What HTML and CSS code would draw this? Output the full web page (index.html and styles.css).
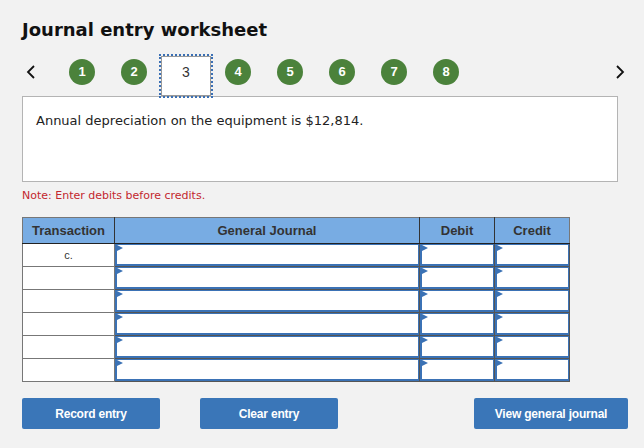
FILE: index.html
```html
<!DOCTYPE html>
<html lang="en">
<head>
    <meta charset="UTF-8">
    <meta name="viewport" content="width=device-width, initial-scale=1.0">
    <title>Journal entry worksheet</title>
    <link rel="stylesheet" href="styles.css">
</head>
<body>
    <div class="page">
        <h1 class="title">Journal entry worksheet</h1>

        <div class="steps">
            <div class="arrow arrow-left">
                <svg width="9" height="14" viewBox="0 0 9 14"><path d="M8 1 L2 7 L8 13" fill="none" stroke="#111" stroke-width="1.8"/></svg>
            </div>
            <div class="slot"><span class="dot">1</span></div>
            <div class="slot"><span class="dot">2</span></div>
            <div class="slot"><span class="current">3</span></div>
            <div class="slot"><span class="dot">4</span></div>
            <div class="slot"><span class="dot">5</span></div>
            <div class="slot"><span class="dot">6</span></div>
            <div class="slot"><span class="dot">7</span></div>
            <div class="slot"><span class="dot">8</span></div>
            <div class="arrow arrow-right">
                <svg width="9" height="14" viewBox="0 0 9 14"><path d="M1 1 L7 7 L1 13" fill="none" stroke="#111" stroke-width="1.8"/></svg>
            </div>
        </div>

        <div class="question">Annual depreciation on the equipment is $12,814.</div>

        <p class="note">Note: Enter debits before credits.</p>

        <table class="journal">
            <thead>
                <tr>
                    <th class="col-trans">Transaction</th>
                    <th class="col-gj">General Journal</th>
                    <th class="col-amt">Debit</th>
                    <th class="col-amt">Credit</th>
                </tr>
            </thead>
            <tbody>
                <tr>
                    <td class="trans">c.</td>
                    <td class="cell"><div class="field"></div></td>
                    <td class="cell"><div class="field"></div></td>
                    <td class="cell"><div class="field"></div></td>
                </tr>
                <tr>
                    <td class="trans"></td>
                    <td class="cell"><div class="field"></div></td>
                    <td class="cell"><div class="field"></div></td>
                    <td class="cell"><div class="field"></div></td>
                </tr>
                <tr>
                    <td class="trans"></td>
                    <td class="cell"><div class="field"></div></td>
                    <td class="cell"><div class="field"></div></td>
                    <td class="cell"><div class="field"></div></td>
                </tr>
                <tr>
                    <td class="trans"></td>
                    <td class="cell"><div class="field"></div></td>
                    <td class="cell"><div class="field"></div></td>
                    <td class="cell"><div class="field"></div></td>
                </tr>
                <tr>
                    <td class="trans"></td>
                    <td class="cell"><div class="field"></div></td>
                    <td class="cell"><div class="field"></div></td>
                    <td class="cell"><div class="field"></div></td>
                </tr>
                <tr>
                    <td class="trans"></td>
                    <td class="cell"><div class="field"></div></td>
                    <td class="cell"><div class="field"></div></td>
                    <td class="cell"><div class="field"></div></td>
                </tr>
            </tbody>
        </table>

        <div class="actions">
            <button class="btn">Record entry</button>
            <button class="btn">Clear entry</button>
            <button class="btn btn-wide">View general journal</button>
        </div>
    </div>
</body>
</html>
```

FILE: styles.css
```css
body {
    margin: 0;
    background-color: #f2f2f2;
    font-family: "DejaVu Sans", Verdana, sans-serif;
    color: #222;
}
.page {
    padding: 0 16px 0 22px;
}
.title {
    margin: 19px 0 0;
    font-size: 18px;
    line-height: 22px;
    font-weight: bold;
    color: #111;
}
.steps {
    position: relative;
    z-index: 1;
    display: flex;
    align-items: flex-start;
    height: 44px;
    margin-top: 13px;
}
.arrow {
    padding-top: 10px;
}
.arrow-left {
    width: 30px;
    padding-left: 4px;
}
.arrow-right {
    margin-left: auto;
    margin-right: 3px;
}
.slot {
    width: 52px;
    display: flex;
    justify-content: center;
}
.dot {
    width: 26px;
    height: 26px;
    margin-top: 5px;
    border-radius: 50%;
    background-color: #4b823b;
    color: white;
    font-family: "Liberation Sans", Arial, sans-serif;
    font-weight: bold;
    font-size: 13px;
    line-height: 26px;
    text-align: center;
}
.current {
    box-sizing: border-box;
    width: 50px;
    height: 40px;
    margin: 2px -1px 0;
    background-color: white;
    border: 1px solid #9a9a9a;
    outline: 2px dotted #3a6fb4;
    color: #333;
    font-family: "Liberation Sans", Arial, sans-serif;
    font-size: 14px;
    line-height: 14px;
    padding-top: 8px;
    text-align: center;
}
.question {
    box-sizing: border-box;
    width: 596px;
    height: 86px;
    margin-top: -2px;
    padding: 16px 13px;
    background-color: white;
    border: 1px solid #b4b4b4;
    font-size: 13px;
    line-height: 15px;
    color: #222;
}
.note {
    margin: 7px 0 0;
    font-size: 11px;
    line-height: 13px;
    color: #c3272e;
}
.journal {
    margin-top: 15px;
    border-collapse: collapse;
    table-layout: fixed;
    border: 1px solid #777;
    font-family: "Liberation Sans", Arial, sans-serif;
}
.journal th {
    height: 25px;
    padding: 0;
    background-color: #78ace3;
    border-left: 1px solid #333;
    border-bottom: 1px solid #222;
    color: #333;
    font-size: 13px;
    font-weight: bold;
    text-align: center;
}
.journal th:first-child {
    border-left: 1px solid #777;
}
.col-trans { width: 91px; }
.col-gj { width: 304px; }
.col-amt { width: 74px; }
.journal td {
    height: 22px;
    padding: 0;
    background-color: white;
}
.trans {
    border: 1px solid #777;
    font-size: 11px;
    color: #333;
    text-align: center;
}
.cell {
    border: 1px solid #555;
    border-top: none;
}
.field {
    position: relative;
    box-sizing: border-box;
    height: 22px;
    border: 1px solid #3b72b5;
    border-left-width: 2px;
    border-bottom-width: 2px;
}
.field::before {
    content: "";
    position: absolute;
    top: 0;
    left: 0;
    border-left: 6px solid #3b72b5;
    border-top: 3px solid transparent;
    border-bottom: 3px solid transparent;
}
.actions {
    display: flex;
    gap: 40px;
    margin-top: 16px;
}
.btn {
    width: 138px;
    height: 31px;
    border: none;
    border-radius: 2px;
    background-color: #3a76b8;
    color: white;
    font-family: "Liberation Sans", Arial, sans-serif;
    font-weight: bold;
    font-size: 12px;
    letter-spacing: -0.2px;
    cursor: pointer;
}
.btn-wide {
    width: 154px;
    margin-left: auto;
}
```
